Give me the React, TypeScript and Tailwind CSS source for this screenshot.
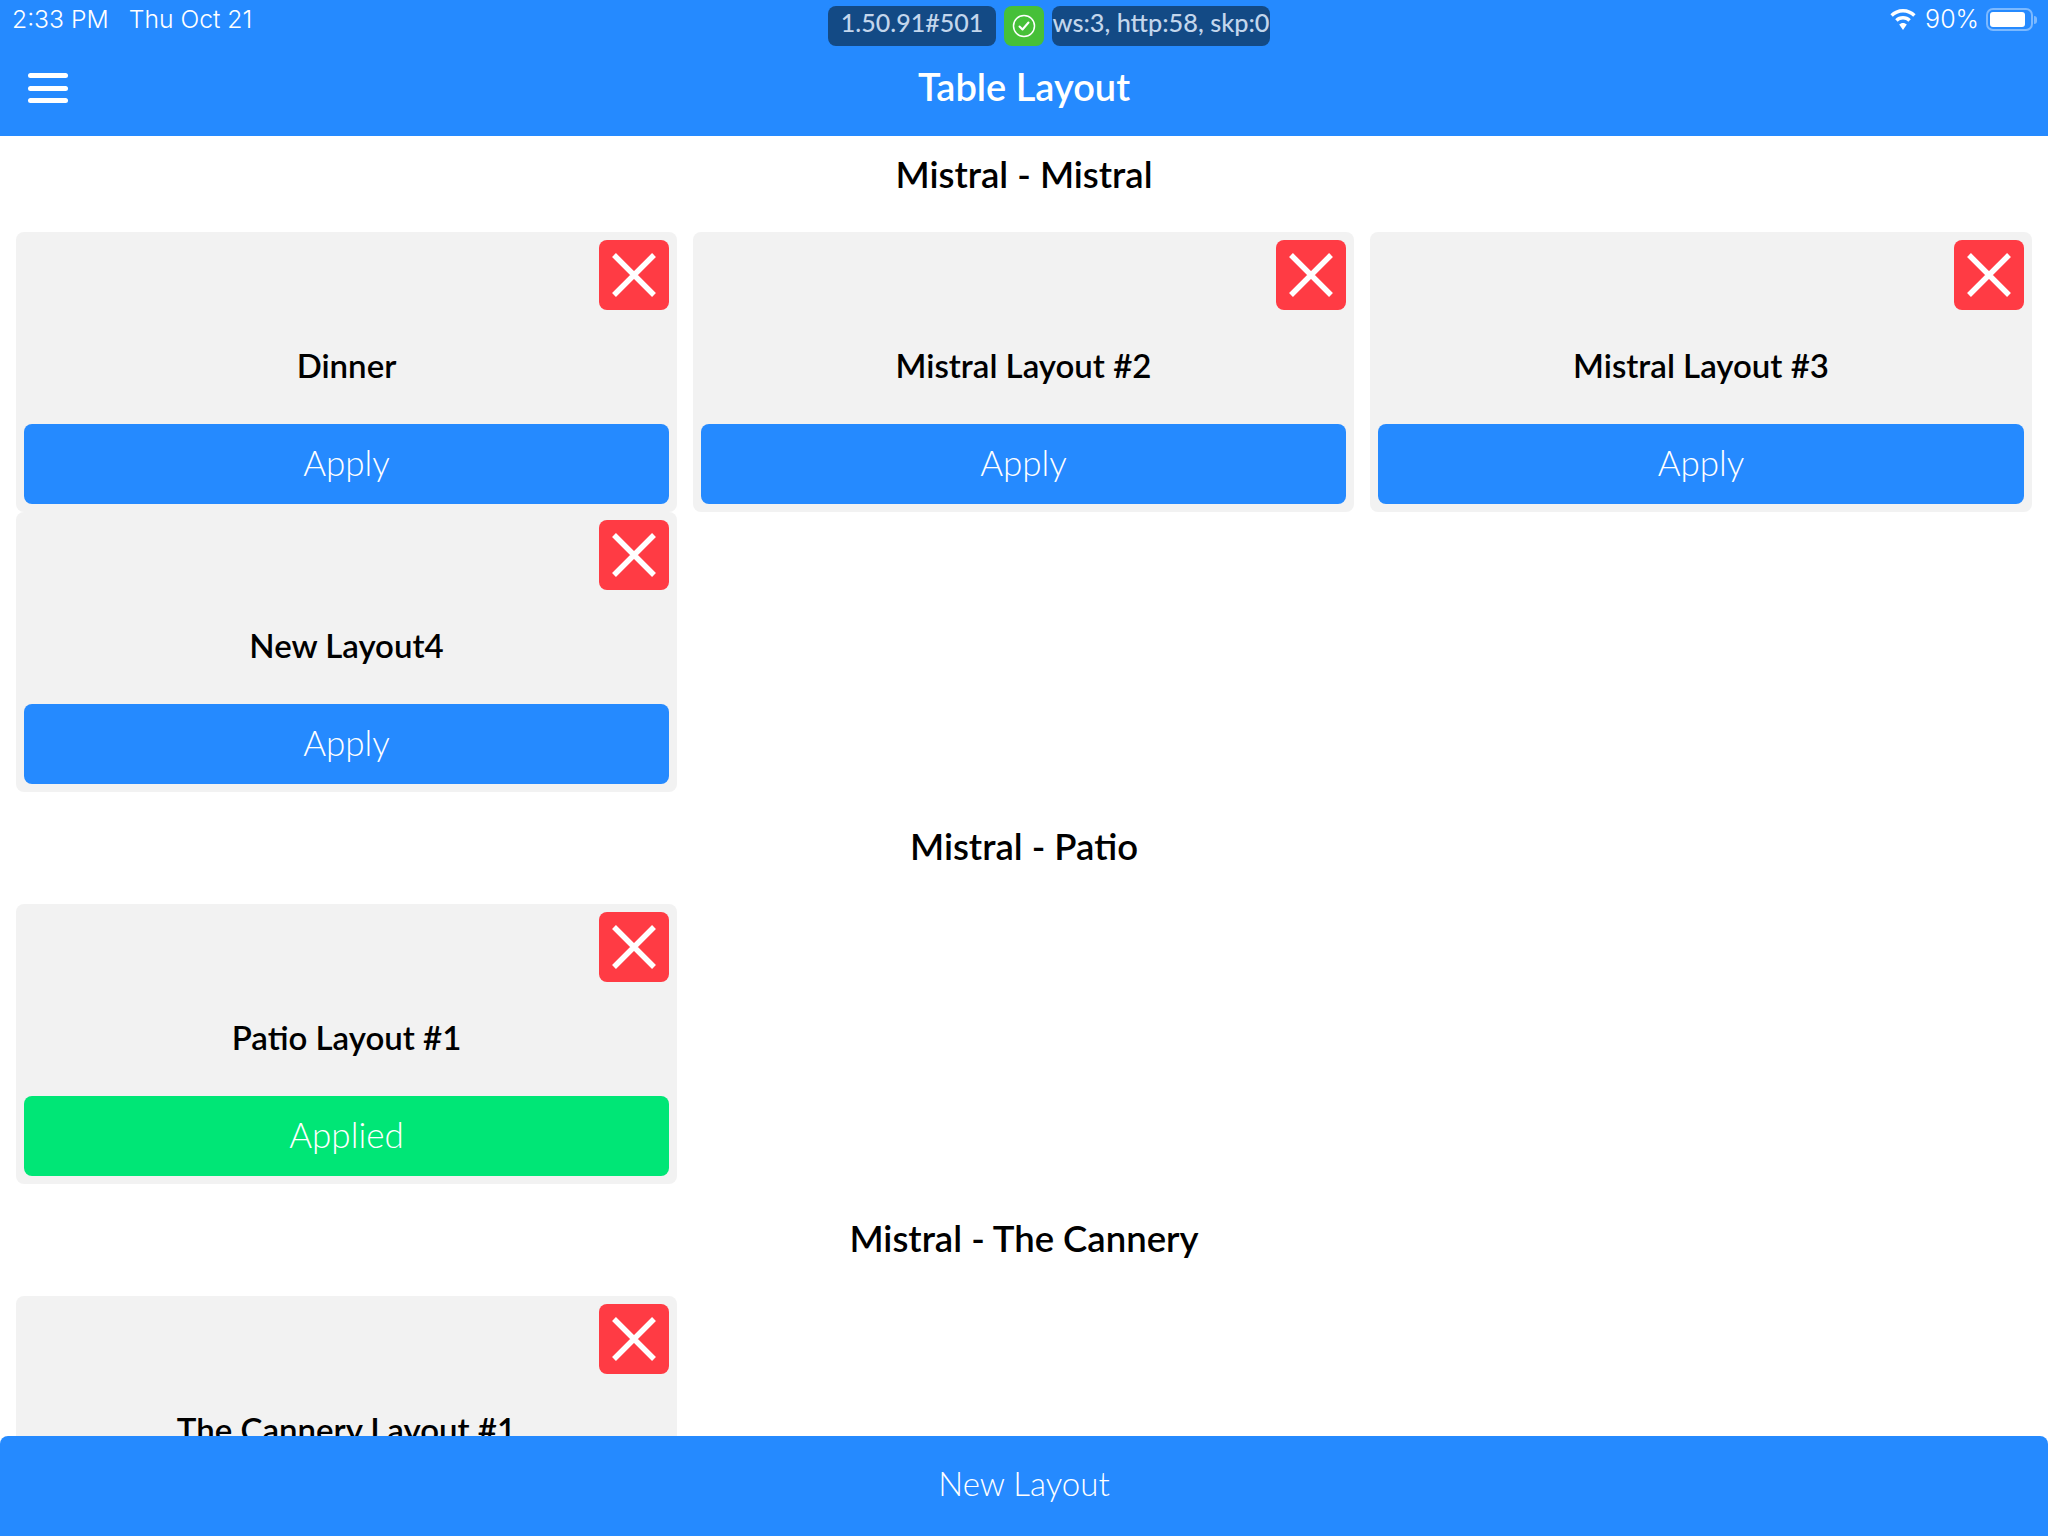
const sections = [
  {
    title: 'Mistral - Mistral',
    layouts: [
      { name: 'Dinner', applied: false },
      { name: 'Mistral Layout #2', applied: false },
      { name: 'Mistral Layout #3', applied: false },
      { name: 'New Layout4', applied: false },
    ],
  },
  { title: 'Mistral - Patio', layouts: [{ name: 'Patio Layout #1', applied: true }] },
  { title: 'Mistral - The Cannery', layouts: [{ name: 'The Cannery Layout #1', applied: false }] },
]

function StatusBar() {
  return (
    <div className="flex h-11 items-center font-['Inter',sans-serif] text-white">
      <div className="flex w-[828px] shrink-0 gap-5 pb-[5px] pl-3 text-[24.7px] font-light">
        <span>2:33 PM</span>
        <span>Thu Oct 21</span>
      </div>
      <div className="mt-2 flex h-10 gap-2 font-['Lato',sans-serif] text-[25px] font-medium">
        <div className="flex w-[168px] items-center justify-center rounded-lg bg-[#134a85] pb-[6px] text-[#c3d6ec]">1.50.91#501</div>
        <div className="flex w-10 items-center justify-center rounded-lg bg-[#46c038]">
          <svg width="24" height="24" viewBox="0 0 24 24" fill="none" stroke="white">
            <circle cx="12" cy="12" r="10.5" strokeWidth="1.5" />
            <path d="M7.5 12.5l3 3 6-7" strokeWidth="2" strokeLinecap="round" strokeLinejoin="round" />
          </svg>
        </div>
        <div className="flex w-[218px] items-center justify-center whitespace-nowrap rounded-lg bg-[#134a85] pb-[6px] text-[25.3px] text-[#c3d6ec]">ws:3, http:58, skp:0</div>
      </div>
      <div className="ml-auto flex items-center pb-[5px] pr-[11px]">
        <svg width="26" height="21" viewBox="0 0 26 21" fill="white">
          <path d="M13 0C8 0 3.6 2 0.4 5.2l2.4 2.6C5.4 5.2 9 3.6 13 3.6s7.6 1.6 10.2 4.2l2.4-2.6C22.4 2 18 0 13 0z" />
          <path d="M13 7c-3 0-5.8 1.2-7.8 3.2l2.5 2.6C9.100 11.400 11 10.600 13 10.600s3.900.8 5.300 2.200l2.500-2.600C18.800 8.200 16 7 13 7z" />
          <path d="M13 14c-1.500 0-2.800.6-3.800 1.500L13 21l3.800-5.500C15.800 14.600 14.500 14 13 14z" />
        </svg>
        <span className="ml-[9px] text-[25px] font-light">90%</span>
        <div className="ml-[7px] flex h-[23px] w-[47px] items-center rounded-[7px] border-2 border-white/40 p-[2px]">
          <div className="h-full w-[35px] rounded-[3px] bg-white" />
        </div>
        <div className="ml-[1px] h-2 w-[3px] rounded-r-sm bg-white/40" />
      </div>
    </div>
  )
}

function Header() {
  return (
    <header className="h-[136px] shrink-0 bg-[#258aff]">
      <StatusBar />
      <div className="relative flex h-[88px] items-center justify-center">
        <div className="absolute left-7 flex w-10 flex-col gap-[7.5px]">
          <div className="h-[5px] rounded-sm bg-white" />
          <div className="h-[5px] rounded-sm bg-white" />
          <div className="h-[5px] rounded-sm bg-white" />
        </div>
        <h1 className="pb-1 text-[38px] font-semibold text-white">Table Layout</h1>
      </div>
    </header>
  )
}

function LayoutCard({ name, applied }: { name: string; applied: boolean }) {
  return (
    <div className="flex h-[280px] flex-col rounded-lg bg-[#f2f2f2] p-2">
      <button className="flex h-[70px] w-[70px] shrink-0 items-center justify-center self-end rounded-lg bg-[#ff3b44]">
        <svg width="44" height="44" viewBox="0 0 44 44" stroke="white" strokeWidth="5.500">
          <path d="M2 2l40 40M42 2L2 42" />
        </svg>
      </button>
      <div className="flex flex-1 items-center justify-center pb-[2px] text-[33px] font-semibold text-black">{name}</div>
      <button
        className={`h-20 shrink-0 rounded-lg pb-1 text-[35px] font-light text-white ${applied ? 'bg-[#00e676]' : 'bg-[#258aff]'}`}
      >
        {applied ? 'Applied' : 'Apply'}
      </button>
    </div>
  )
}

export default function App() {
  return (
    <div className="flex h-screen flex-col overflow-hidden bg-white font-['Lato',sans-serif]">
      <Header />
      <main className="min-h-0 flex-1 overflow-hidden px-4">
        {sections.map((section, i) => (
          <section key={section.title} className={i > 0 ? 'mt-4' : ''}>
            <h2 className="mb-5 flex h-[76px] items-center justify-center text-[36.5px] font-semibold text-black">
              {section.title}
            </h2>
            <div className="grid grid-cols-[661px_661px_662px] justify-between">
              {section.layouts.map((layout) => (
                <LayoutCard key={layout.name} name={layout.name} applied={layout.applied} />
              ))}
            </div>
          </section>
        ))}
      </main>
      <button className="h-[100px] shrink-0 rounded-t-lg bg-[#258aff] pb-1 text-[33px] font-light text-white">New Layout</button>
    </div>
  )
}
